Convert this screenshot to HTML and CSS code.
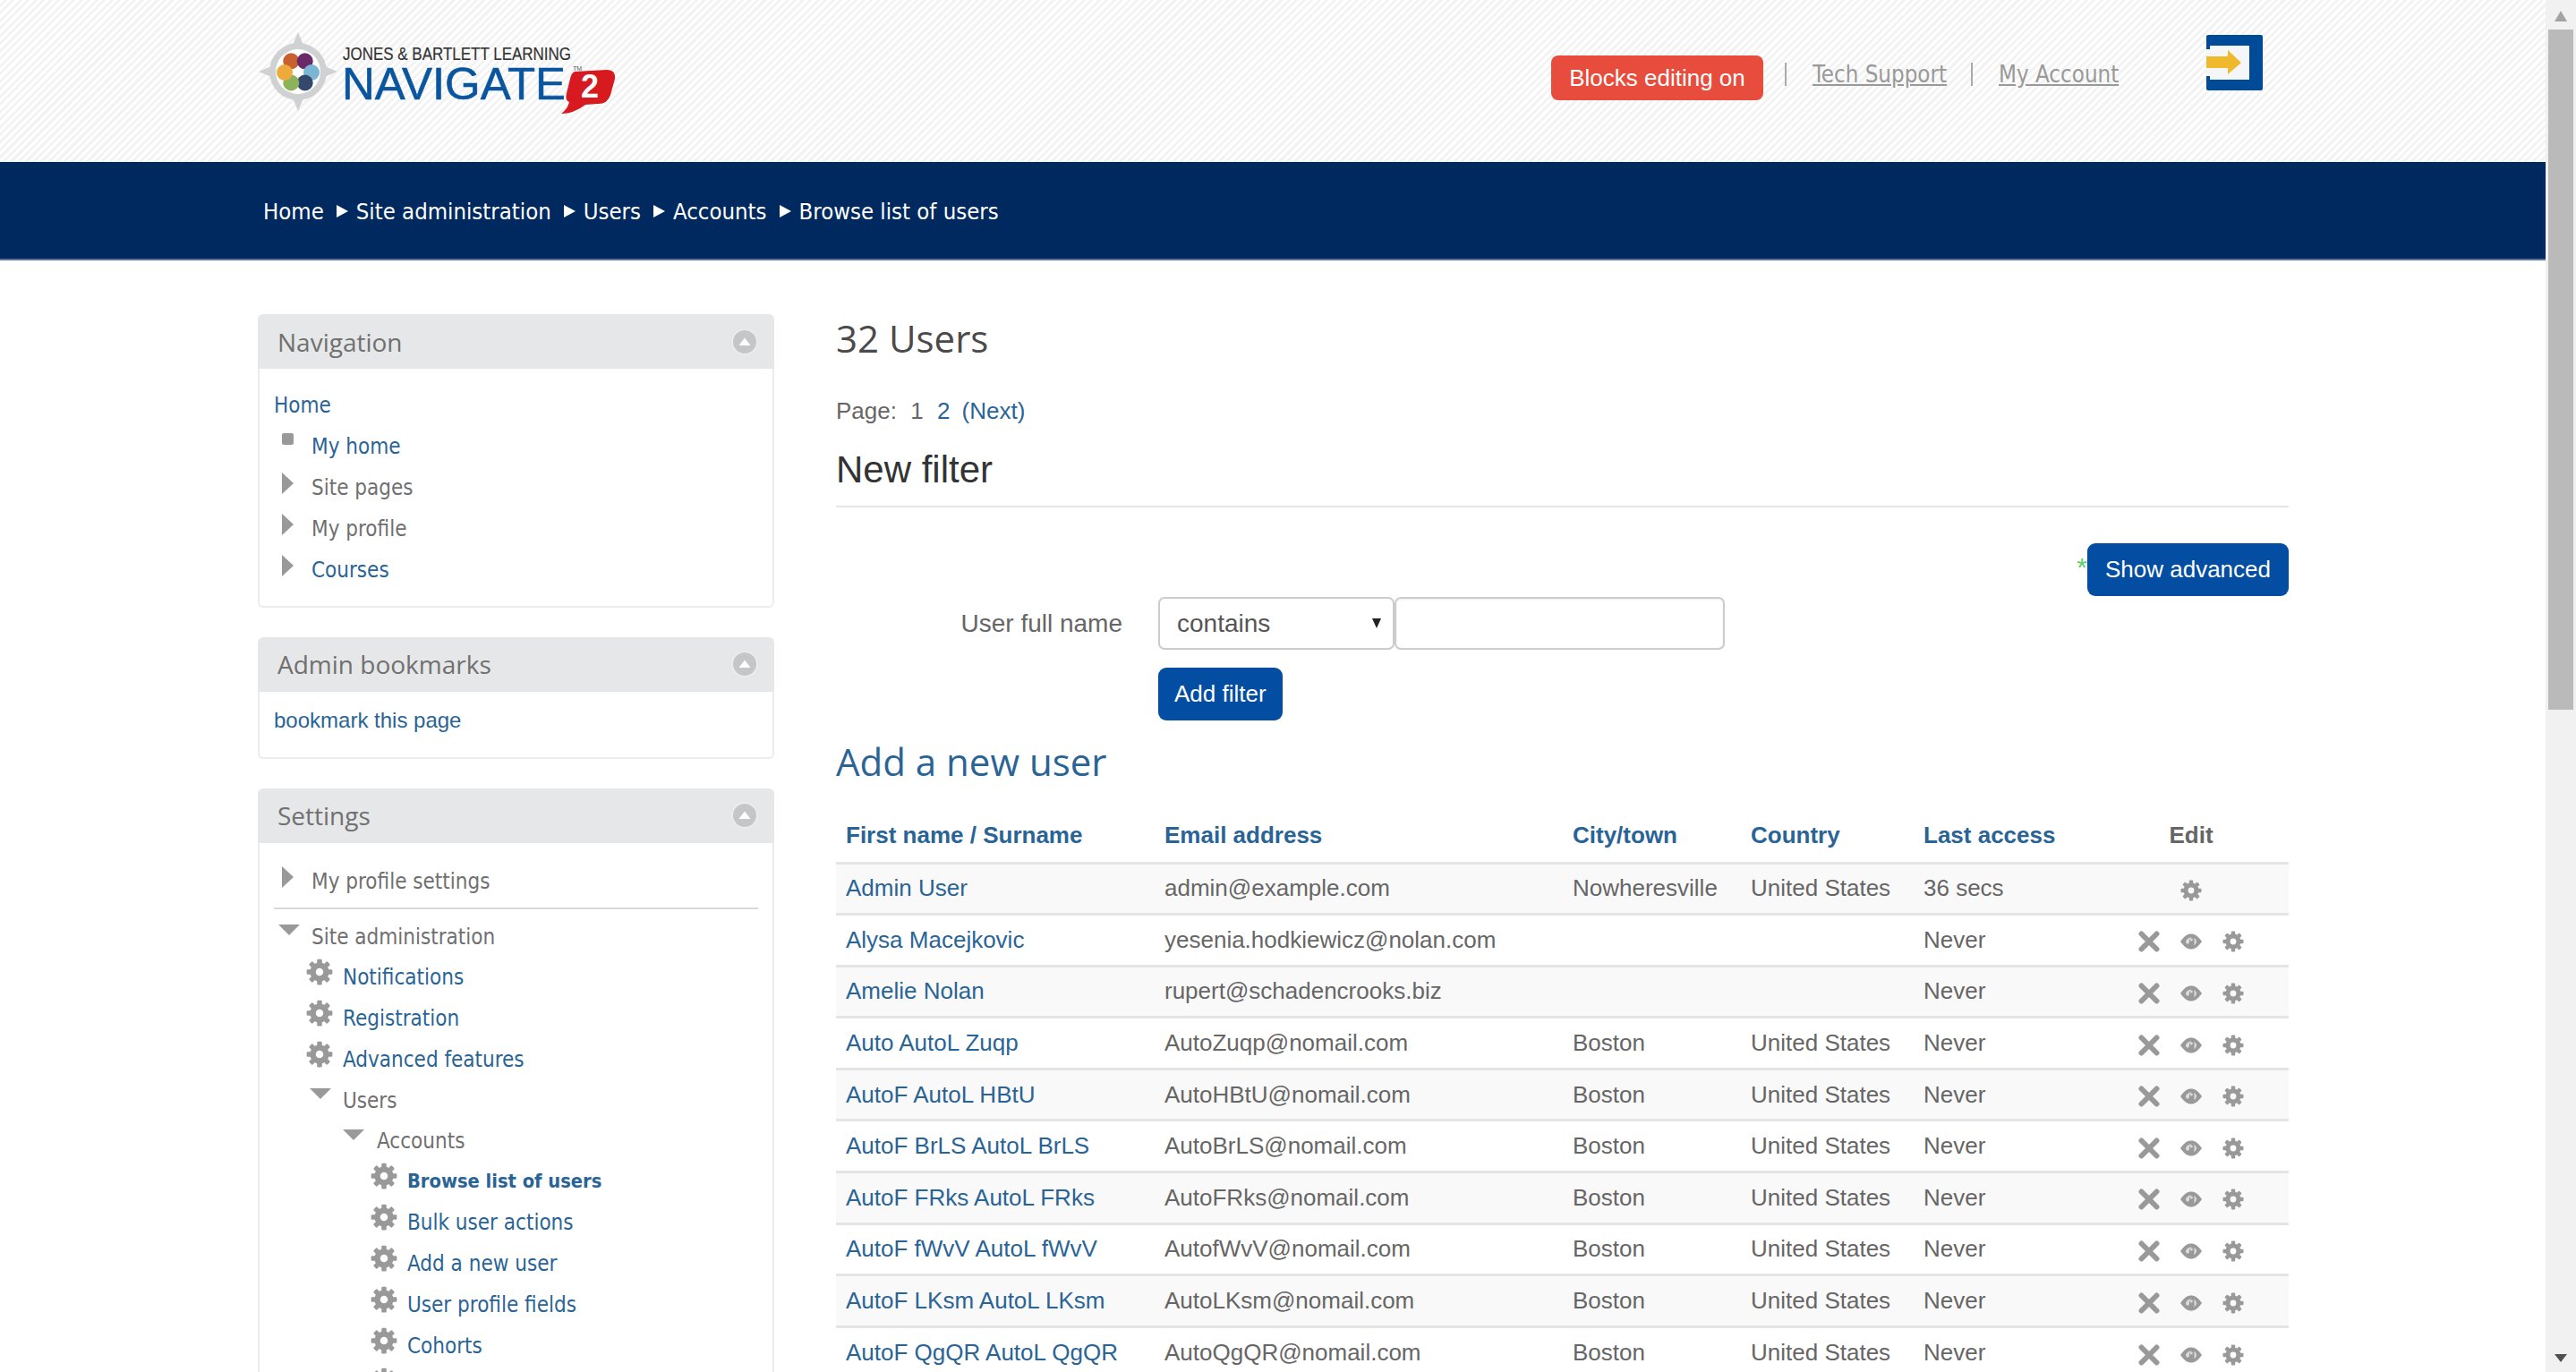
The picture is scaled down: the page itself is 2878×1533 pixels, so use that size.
FILE: index.html
```html
<!DOCTYPE html>
<html lang="en">
<head>
<meta charset="utf-8">
<title>32 Users</title>
<link rel="stylesheet" href="styles.css">
</head>
<body>
<svg class="sprites" width="0" height="0" aria-hidden="true">
  <symbol id="gear" viewBox="0 0 24 24">
    <g fill="#999">
      <path fill-rule="evenodd" d="M12 3.5a8.500 8.500 0 1 0 0 17 8.500 8.500 0 0 0 0-17zM12 8.600a3.400 3.400 0 1 1 0 6.800 3.400 3.400 0 0 1 0-6.800z"/>
      <rect x="9.800" y="0.500" width="4.400" height="5" rx="1"/>
      <rect x="9.800" y="18.500" width="4.400" height="5" rx="1"/>
      <rect x="0.500" y="9.800" width="5" height="4.400" rx="1"/>
      <rect x="18.500" y="9.800" width="5" height="4.400" rx="1"/>
      <rect x="9.800" y="0.500" width="4.400" height="5" rx="1" transform="rotate(45 12 12)"/>
      <rect x="9.800" y="0.500" width="4.400" height="5" rx="1" transform="rotate(135 12 12)"/>
      <rect x="9.800" y="0.500" width="4.400" height="5" rx="1" transform="rotate(225 12 12)"/>
      <rect x="9.800" y="0.500" width="4.400" height="5" rx="1" transform="rotate(315 12 12)"/>
    </g>
  </symbol>
  <symbol id="cross" viewBox="0 0 24 24">
    <path d="M3.500 3.500L20.500 20.500M20.500 3.500L3.500 20.500" stroke="#999" stroke-width="6" stroke-linecap="round" fill="none"/>
  </symbol>
  <symbol id="eye" viewBox="0 0 24 24">
    <path d="M0 12C4 6 8 3.500 12 3.500S20 6 24 12C20 18 16 20.500 12 20.500S4 18 0 12Z" fill="#999"/>
    <path d="M6 12.500C6.500 9 9.500 7.500 12.500 7.500L10.500 9.500C9.800 10.500 9.800 11.500 10.200 12.600L8.500 15C7 14.500 6.200 13.500 6 12.500Z" fill="#dcdcdc"/>
    <path d="M15 8C17 9 18 10.500 18 12C18 13.500 16.500 15.500 15 16C15.800 14 15.800 10.500 15 8Z" fill="#dcdcdc"/>
    <circle cx="12.300" cy="10" r="1.500" fill="#dcdcdc"/>
  </symbol>
  <symbol id="collapse" viewBox="0 0 30 30">
    <circle cx="15" cy="15" r="14.500" fill="#eeeeee"/>
    <circle cx="15" cy="15" r="13" fill="#c5c6c7"/>
    <path d="M8.500 19L15 10.500L21.500 19Z" fill="#fff"/>
  </symbol>
</svg>

<div class="window">
  <div class="viewport">
    <header class="topbar">
      <svg class="logo" viewBox="0 0 400 100" width="400" height="100" role="img" aria-label="Jones &amp; Bartlett Learning Navigate 2">
        <polygon points="45,6 58,37 89,50 58,63 45,94 32,63 1,50 32,37" fill="#cfd1d3"/>
        <circle cx="45" cy="50" r="32" fill="#cfd1d3"/>
        <circle cx="45" cy="50" r="25" fill="#fff"/>
        <circle cx="37.300" cy="38.300" r="9" fill="#c8602f"/>
        <circle cx="52.700" cy="38.300" r="9" fill="#6a2a6a"/>
        <circle cx="60" cy="51" r="9" fill="#7ab6d3"/>
        <circle cx="52.700" cy="62.500" r="9" fill="#34486e"/>
        <circle cx="37.300" cy="62.500" r="9" fill="#8cb35a"/>
        <circle cx="30" cy="51" r="9" fill="#eeaa3c"/>
        <circle cx="45" cy="50" r="4.500" fill="#fff"/>
        <text class="logo-jb" x="95" y="37" textLength="255" lengthAdjust="spacingAndGlyphs">JONES &amp; BARTLETT LEARNING</text>
        <text class="logo-nav" x="94" y="81" textLength="250" lengthAdjust="spacingAndGlyphs">NAVIGATE</text>
        <text class="logo-tm" x="352" y="49">TM</text>
        <path d="M354 50L390 48Q400 48 399 58L394 76Q391 86 380 86L366 87Q353 97 339 97Q346 92 348 84Q343 82 345 74L349 58Q350 52 354 50Z" fill="#d71920"/>
        <text class="logo-two" x="371" y="79" text-anchor="middle">2</text>
      </svg>
      <div class="toplinks">
        <a class="btn-edit" href="#">Blocks editing on</a>
        <span class="sep"></span>
        <a class="toplink" href="#">Tech Support</a>
        <span class="sep"></span>
        <a class="toplink" href="#">My Account</a>
      </div>
      <svg class="exit" viewBox="0 0 63 62" width="63" height="62" role="img" aria-label="Log out">
        <rect width="63" height="62" rx="2" fill="#004b97"/>
        <rect x="0" y="12" width="48" height="38" fill="#f5f6f8"/>
        <rect x="0" y="12" width="4" height="4" fill="#004b97"/>
        <rect x="0" y="46" width="4" height="4" fill="#004b97"/>
        <path d="M0 24H24V17L39 31L24 44V37H0Z" fill="#f0b92d"/>
      </svg>
    </header>

    <nav class="crumbs">
      <a href="#">Home</a><span class="arrow"></span>
      <a href="#">Site administration</a><span class="arrow"></span>
      <a href="#">Users</a><span class="arrow"></span>
      <a href="#">Accounts</a><span class="arrow"></span>
      <a href="#">Browse list of users</a>
    </nav>

    <div class="layout">
      <aside class="sidebar">
        <section class="block">
          <div class="block-head"><h2>Navigation</h2><svg class="collapse"><use href="#collapse"/></svg></div>
          <div class="block-body nav-body">
            <a class="tree-root" href="#">Home</a>
            <ul class="tree">
              <li class="row"><span class="ic ic-square"></span><a href="#">My home</a></li>
              <li class="row"><span class="ic ic-right"></span><span class="plain">Site pages</span></li>
              <li class="row"><span class="ic ic-right"></span><span class="plain">My profile</span></li>
              <li class="row"><span class="ic ic-right"></span><a href="#">Courses</a></li>
            </ul>
          </div>
        </section>

        <section class="block">
          <div class="block-head"><h2>Admin bookmarks</h2><svg class="collapse"><use href="#collapse"/></svg></div>
          <div class="block-body bookmark-body"><a href="#">bookmark this page</a></div>
        </section>

        <section class="block block-last">
          <div class="block-head"><h2>Settings</h2><svg class="collapse"><use href="#collapse"/></svg></div>
          <div class="block-body settings-body">
            <ul class="tree">
              <li class="row row-sep"><span class="ic ic-right"></span><span class="plain">My profile settings</span></li>
              <li class="row"><span class="ic ic-down"></span><span class="plain">Site administration</span></li>
            </ul>
            <ul class="tree sub">
              <li class="row"><svg class="ic-gear"><use href="#gear"/></svg><a href="#">Notifications</a></li>
              <li class="row"><svg class="ic-gear"><use href="#gear"/></svg><a href="#">Registration</a></li>
              <li class="row"><svg class="ic-gear"><use href="#gear"/></svg><a href="#">Advanced features</a></li>
              <li class="row"><span class="ic ic-down"></span><span class="plain">Users</span></li>
            </ul>
            <ul class="tree sub sub2">
              <li class="row"><span class="ic ic-down"></span><span class="plain">Accounts</span></li>
            </ul>
            <ul class="tree sub sub3">
              <li class="row"><svg class="ic-gear"><use href="#gear"/></svg><a class="current" href="#">Browse list of users</a></li>
              <li class="row"><svg class="ic-gear"><use href="#gear"/></svg><a href="#">Bulk user actions</a></li>
              <li class="row"><svg class="ic-gear"><use href="#gear"/></svg><a href="#">Add a new user</a></li>
              <li class="row"><svg class="ic-gear"><use href="#gear"/></svg><a href="#">User profile fields</a></li>
              <li class="row"><svg class="ic-gear"><use href="#gear"/></svg><a href="#">Cohorts</a></li>
              <li class="row row-clipped"><svg class="ic-gear"><use href="#gear"/></svg></li>
            </ul>
          </div>
        </section>
      </aside>

      <main class="content">
        <h1 class="title">32 Users</h1>
        <p class="pager">Page: <span class="pnum">1</span> <a href="#">2</a> <a href="#">(Next)</a></p>
        <h2 class="legend">New filter</h2>
        <div class="adv-row"><span class="star">*</span><button class="btn" type="button">Show advanced</button></div>
        <div class="form-row">
          <label class="form-label" for="f">User full name</label>
          <div class="select-wrap"><select class="select"><option>contains</option></select></div>
          <input class="text-input" id="f" type="text">
        </div>
        <div class="submit-row"><button class="btn btn-small" type="button">Add filter</button></div>
        <h2 class="add-user"><a href="#">Add a new user</a></h2>

        <table class="users">
          <colgroup><col class="c1"><col class="c2"><col class="c3"><col class="c4"><col class="c5"><col class="c6"></colgroup>
          <thead>
            <tr><th><a href="#">First name</a> / <a href="#">Surname</a></th><th><a href="#">Email address</a></th><th><a href="#">City/town</a></th><th><a href="#">Country</a></th><th><a href="#">Last access</a></th><th class="edit-h">Edit</th></tr>
          </thead>
          <tbody>
            <tr><td><a href="#">Admin User</a></td><td>admin@example.com</td><td>Nowheresville</td><td>United States</td><td>36 secs</td><td><div class="acts"><svg class="act"><use href="#gear"/></svg></div></td></tr>
            <tr><td><a href="#">Alysa Macejkovic</a></td><td>yesenia.hodkiewicz@nolan.com</td><td></td><td></td><td>Never</td><td><div class="acts"><svg class="act"><use href="#cross"/></svg><svg class="act"><use href="#eye"/></svg><svg class="act"><use href="#gear"/></svg></div></td></tr>
            <tr><td><a href="#">Amelie Nolan</a></td><td>rupert@schadencrooks.biz</td><td></td><td></td><td>Never</td><td><div class="acts"><svg class="act"><use href="#cross"/></svg><svg class="act"><use href="#eye"/></svg><svg class="act"><use href="#gear"/></svg></div></td></tr>
            <tr><td><a href="#">Auto AutoL Zuqp</a></td><td>AutoZuqp@nomail.com</td><td>Boston</td><td>United States</td><td>Never</td><td><div class="acts"><svg class="act"><use href="#cross"/></svg><svg class="act"><use href="#eye"/></svg><svg class="act"><use href="#gear"/></svg></div></td></tr>
            <tr><td><a href="#">AutoF AutoL HBtU</a></td><td>AutoHBtU@nomail.com</td><td>Boston</td><td>United States</td><td>Never</td><td><div class="acts"><svg class="act"><use href="#cross"/></svg><svg class="act"><use href="#eye"/></svg><svg class="act"><use href="#gear"/></svg></div></td></tr>
            <tr><td><a href="#">AutoF BrLS AutoL BrLS</a></td><td>AutoBrLS@nomail.com</td><td>Boston</td><td>United States</td><td>Never</td><td><div class="acts"><svg class="act"><use href="#cross"/></svg><svg class="act"><use href="#eye"/></svg><svg class="act"><use href="#gear"/></svg></div></td></tr>
            <tr><td><a href="#">AutoF FRks AutoL FRks</a></td><td>AutoFRks@nomail.com</td><td>Boston</td><td>United States</td><td>Never</td><td><div class="acts"><svg class="act"><use href="#cross"/></svg><svg class="act"><use href="#eye"/></svg><svg class="act"><use href="#gear"/></svg></div></td></tr>
            <tr><td><a href="#">AutoF fWvV AutoL fWvV</a></td><td>AutofWvV@nomail.com</td><td>Boston</td><td>United States</td><td>Never</td><td><div class="acts"><svg class="act"><use href="#cross"/></svg><svg class="act"><use href="#eye"/></svg><svg class="act"><use href="#gear"/></svg></div></td></tr>
            <tr><td><a href="#">AutoF LKsm AutoL LKsm</a></td><td>AutoLKsm@nomail.com</td><td>Boston</td><td>United States</td><td>Never</td><td><div class="acts"><svg class="act"><use href="#cross"/></svg><svg class="act"><use href="#eye"/></svg><svg class="act"><use href="#gear"/></svg></div></td></tr>
            <tr><td><a href="#">AutoF QgQR AutoL QgQR</a></td><td>AutoQgQR@nomail.com</td><td>Boston</td><td>United States</td><td>Never</td><td><div class="acts"><svg class="act"><use href="#cross"/></svg><svg class="act"><use href="#eye"/></svg><svg class="act"><use href="#gear"/></svg></div></td></tr>
          </tbody>
        </table>
      </main>
    </div>
  </div>

  <div class="scrollbar" aria-hidden="true">
    <span class="sb-up"></span>
    <span class="sb-thumb"></span>
    <span class="sb-down"></span>
  </div>
</div>
</body>
</html>
```

FILE: styles.css
```css
* { box-sizing: border-box; }
html, body { margin: 0; height: 100%; overflow: hidden; }
body { font-family: "Liberation Sans", Arial, sans-serif; font-size: 26px; color: #666; background: #fff; }
a { color: #2a6496; text-decoration: none; }
ul { list-style: none; margin: 0; padding: 0; }
h1, h2, p { margin: 0; font-weight: 400; }
.sprites { position: absolute; }

.window { display: flex; height: 1533px; }
.viewport { flex: 1; min-width: 0; overflow: hidden; }

.scrollbar { width: 34px; flex: none; background: #f1f1f1; display: flex; flex-direction: column; align-items: center; }
.sb-up { width: 0; height: 0; margin-top: 12px; border-left: 7px solid transparent; border-right: 7px solid transparent; border-bottom: 12px solid #a3a3a3; }
.sb-thumb { width: 28px; height: 760px; margin-top: 9px; background: #bababa; }
.sb-down { width: 0; height: 0; margin-top: auto; margin-bottom: 11px; border-left: 7px solid transparent; border-right: 7px solid transparent; border-top: 9px solid #505050; }

.topbar { height: 181px; padding-left: 288px; display: flex; align-items: flex-start; background: repeating-linear-gradient(135deg, #fff 0, #fff 3px, #f3f3f3 3px, #f3f3f3 6px); }
.logo { margin-top: 30px; flex: none; }
.logo-jb { font-family: "Liberation Sans", sans-serif; font-size: 20px; fill: #333; stroke: #333; stroke-width: .2px; }
.logo-nav { font-family: "Liberation Sans", sans-serif; font-size: 50px; fill: #0a559f; stroke: #0a559f; stroke-width: .6px; }
.logo-tm { font-family: "Liberation Sans", sans-serif; font-size: 7px; fill: #555; }
.logo-two { font-family: "Liberation Sans", sans-serif; font-size: 36px; font-weight: 700; fill: #fff; }

.toplinks { display: flex; align-items: center; margin-left: 1045px; margin-top: 62px; height: 50px; }
.btn-edit { display: flex; align-items: center; justify-content: center; width: 237px; height: 50px; background: #e74c3c; color: #fff; border-radius: 8px; font-size: 26px; }
.sep { width: 2px; height: 26px; margin: -8px 29px 0 24px; background: #aaa; }
.toplink + .sep { margin-left: 27px; }
.toplink { font-family: "DejaVu Sans Condensed", "DejaVu Sans", sans-serif; font-size: 25.7px; color: #999; text-decoration: underline; margin-top: -8px; }
.exit { margin-left: 98px; margin-top: 39px; flex: none; }

.crumbs { height: 110px; padding: 2px 0 0 294px; display: flex; align-items: center; background: #002a5f; border-bottom: 2px solid #5d7199; font-family: "DejaVu Sans Condensed", "DejaVu Sans", sans-serif; font-size: 25.5px; }
.crumbs a { color: #fff; }
.arrow { width: 0; height: 0; margin: 0 9px 0 14px; border-left: 13px solid #fff; border-top: 7px solid transparent; border-bottom: 7px solid transparent; }

.layout { display: grid; grid-template-columns: 577px 1623px; column-gap: 69px; padding: 60px 0 0 288px; }

.sidebar { font-family: "DejaVu Sans Condensed", "DejaVu Sans", sans-serif; font-size: 24px; }
.sidebar a { color: #2a6496; }
.block { margin-bottom: 33px; }
.block-head { height: 61px; padding: 0 18px 0 22px; display: flex; align-items: center; justify-content: space-between; background: #e6e7e8; border-radius: 6px 6px 0 0; }
.block-head h2 { font-family: "Open Sans", sans-serif; font-size: 28px; color: #707070; }
.collapse { width: 30px; height: 30px; flex: none; }
.block-body { border: 2px solid #ececec; border-top: 0; border-radius: 0 0 6px 6px; padding: 0 16px; }
.nav-body { padding-top: 18px; padding-bottom: 17px; }
.bookmark-body { padding-top: 9px; padding-bottom: 21px; height: 75px; line-height: 46px; font-family: "Liberation Sans", sans-serif; font-size: 24px; }
.settings-body { padding-top: 20px; }
.tree-root { display: block; line-height: 46px; }
.row { display: flex; align-items: center; height: 45.9px; padding-left: 42px; position: relative; white-space: nowrap; }
.row-sep { height: 46px; margin-bottom: 16px; }
.row-sep::after { content: ""; position: absolute; left: 0; right: 0; bottom: -8px; height: 2px; background: #d9d9d9; }
.plain { color: #707070; }
.current { font-weight: 700; font-size: 21.7px; }
.sub { padding-left: 35px; }
.sub2 { padding-left: 72px; }
.sub3 { padding-left: 107px; }
.sub .row { padding-left: 42px; }
.sub2 .row { padding-left: 43px; height: 44px; }
.ic { position: absolute; }
.ic-square { left: 9px; top: 8px; width: 13px; height: 13px; background: #999; border-radius: 2px; }
.ic-right { left: 9px; top: 6px; width: 0; height: 0; border-left: 13px solid #999; border-top: 12px solid transparent; border-bottom: 12px solid transparent; }
.ic-down { left: 5px; top: 9px; width: 0; height: 0; border-top: 12px solid #999; border-left: 12px solid transparent; border-right: 12px solid transparent; }
.ic-gear { position: absolute; left: 1px; top: 2px; width: 30px; height: 30px; }

.title { font-family: "Open Sans", sans-serif; font-size: 42px; line-height: 54px; color: #4a4a4a; }
.pager { margin-top: 39px; line-height: 30px; height: 30px; }
.pager .pnum { margin: 0 8px 0 8px; color: #666; }
.pager a { margin-right: 6px; }
.legend { margin-top: 27px; font-size: 42px; line-height: 48px; color: #333; padding-bottom: 16px; border-bottom: 2px solid #e5e5e5; }
.adv-row { display: flex; justify-content: flex-end; margin-top: 40px; position: relative; }
.star { color: #5fce70; font-size: 30px; line-height: 1; padding-top: 12px; }
.btn { height: 59px; padding: 0 20px; border: 0; border-radius: 9px; background: #034ea2; color: #fff; font-family: "Liberation Sans", sans-serif; font-size: 26px; }
.btn-small { padding: 0 18px; }
.form-row { display: flex; align-items: center; margin-top: 1px; }
.form-label { flex: none; width: 360px; padding-right: 40px; font-size: 28px; text-align: right; white-space: nowrap; }
.select-wrap { flex: none; width: 264px; position: relative; }
.select-wrap::after { content: ""; position: absolute; right: 15px; top: 24px; border-top: 11px solid #222; border-left: 5px solid transparent; border-right: 5px solid transparent; }
.select { width: 100%; height: 59px; padding: 0 19px; appearance: none; background: #fff; border: 2px solid #ccc; border-radius: 7px; color: #555; font-family: "Liberation Sans", sans-serif; font-size: 28px; }
.text-input { flex: none; width: 369px; height: 59px; background: #fff; border: 2px solid #ccc; border-radius: 7px; box-shadow: inset 0 1px 2px rgba(0, 0, 0, .08); }
.submit-row { margin: 20px 0 0 360px; }
.add-user { margin-top: 19px; font-family: "Open Sans", sans-serif; font-size: 42px; line-height: 54px; }
.users { width: 1623px; margin-top: 19px; border-collapse: collapse; table-layout: fixed; }
.c1 { width: 356px; } .c2 { width: 456px; } .c3 { width: 199px; } .c4 { width: 193px; } .c5 { width: 201px; } .c6 { width: 218px; }
.users th { height: 67px; padding: 8px 11px 0; text-align: left; font-weight: 700; color: #2a6496; vertical-align: middle; }
.users th.edit-h { text-align: center; color: #666; }
.users td { height: 57.6px; padding: 0 11px; border-top: 3px solid #e4e4e4; white-space: nowrap; vertical-align: middle; }
.users tbody tr:nth-child(odd) { background: #f9f9f9; }
.acts { display: flex; justify-content: center; gap: 23px; padding-top: 4px; }
.act { width: 24px; height: 24px; flex: none; }
```
